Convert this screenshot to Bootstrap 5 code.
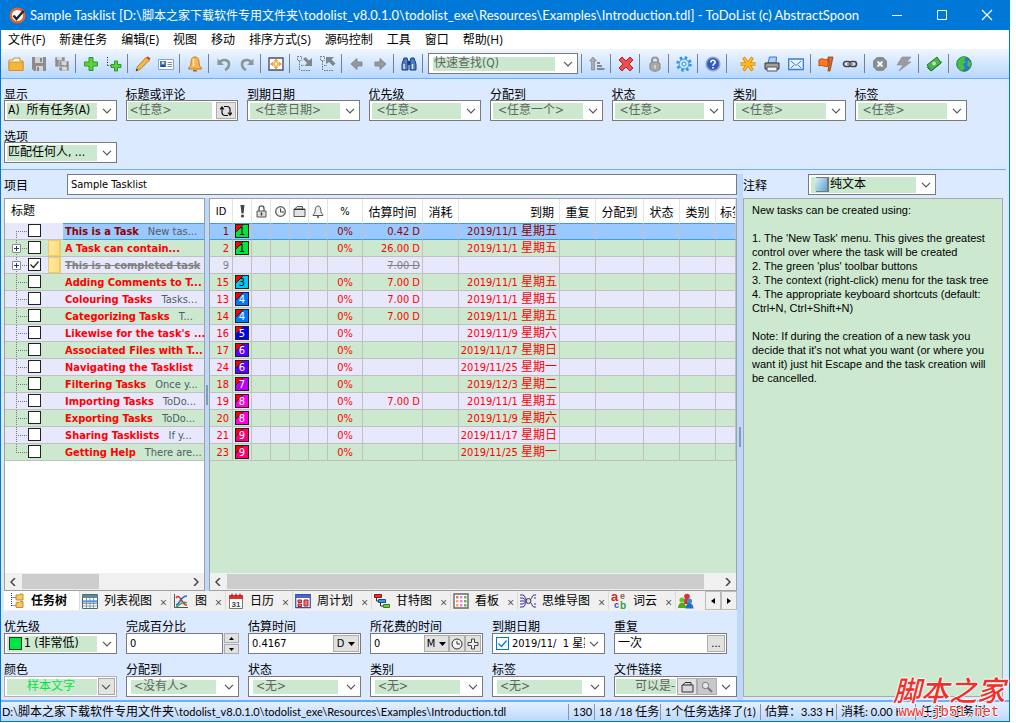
<!DOCTYPE html>
<html lang="zh-CN">
<head>
<meta charset="utf-8">
<meta name="viewport" content="width=device-width, initial-scale=1">
<title>Sample Tasklist - ToDoList</title>
<link href="https://cdn.jsdelivr.net/npm/bootstrap@5.3.0/dist/css/bootstrap.min.css" rel="stylesheet">
<style>
:root{--green:#cce8cf;--lav:#e8e8fd;--panel:#dceaff;--split:#bcd8fd;--line:#6cb0fc;--edge:#7a7a7a;
  --chev:url("data:image/svg+xml,%3Csvg xmlns='http://www.w3.org/2000/svg' viewBox='0 0 10 6'%3E%3Cpath d='M1 .8l4 4 4-4' fill='none' stroke='%23555' stroke-width='1.2'/%3E%3C/svg%3E");}
body{font:11px/14px "DejaVu Sans Condensed","Open Sans","Noto Sans CJK SC",sans-serif;color:#000;background:#fff;padding:0 6px 1px 0}
.app{min-height:calc(100vh - 1px);border:1px solid #0078d7;border-top:0;background:var(--panel)}
.zh,label.cap,.menu a,.tabs-row button{font-size:12px;font-family:"Open Sans","Noto Sans CJK SC",sans-serif}
.titlebar{height:30px;background:#0078d7;color:#fff;font:13px/29px Lato,"Noto Sans CJK SC",sans-serif}
.titlebar .path-zh{font-size:12px}
.titlebar button{flex:none;width:45px;height:30px;padding:0;border:0;background:none;color:#fff;line-height:0}
.menu{height:19px;background:#fff}
.menu a{padding:0 7px;line-height:20px;color:#000;text-decoration:none}
.toolbar{height:30px;padding-left:3px;background:linear-gradient(#eff6ff,#b8d8fe);border-bottom:1px solid var(--line)}
.toolbar button{width:23px;height:24px;padding:0;border:0;background:none;line-height:0}
.toolbar .wide{margin-left:6px}
.toolbar .wide button{width:24px}
.quick{width:150px;margin:0 1px 0 2px}
.sep{width:6px;height:19px;background:linear-gradient(#76808e,#76808e) 2px 0/1px 100% no-repeat}
svg{flex:none}
.combo{display:block;width:100%;height:21px;padding:0 20px 0 7px;appearance:none;border:1px solid var(--edge);border-radius:0;font:12px/17px "DejaVu Sans Condensed","Noto Sans CJK SC",sans-serif;color:#5d665f;background-color:#fff;background-repeat:no-repeat;
  background-image:var(--chev),linear-gradient(var(--green),var(--green));background-position:right 4px center,2px 2px;background-size:10px 6px,calc(100% - 21px) 16px}
.combo.dark{color:#000;padding-left:3px}
.combo.inset{background-position:right 4px center,4px 3px;background-size:10px 6px,calc(100% - 26px) 14px}
.quick .combo{padding-left:5px}
.combo.level{padding-left:19px;background-image:var(--chev),linear-gradient(#00e640,#00e640),linear-gradient(#333,#333),linear-gradient(var(--green),var(--green));background-position:right 4px center,5px 4px,4px 3px,2px 2px;background-size:10px 6px,11px 11px,13px 13px,calc(100% - 21px) 16px}
.combo.sample{color:#00e640;padding-left:22px;border-color:#b0b0b0;background-image:var(--chev),linear-gradient(#e4e4e4,#e4e4e4),linear-gradient(#a8a8a8,#a8a8a8),linear-gradient(var(--green),var(--green));background-position:right 5px center,right 2px top 2px,right 1px top 1px,2px 2px;background-size:10px 6px,15px 15px,17px 17px,calc(100% - 21px) 16px}
.combo.format{padding-left:21px;background-image:var(--chev),linear-gradient(120deg,#d8f0fa,#5ca4cc),linear-gradient(#777,#777),linear-gradient(var(--green),var(--green));background-position:right 4px center,6px 3px,7px 2px,2px 2px;background-size:10px 6px,12px 13px,13px 15px,calc(100% - 21px) 16px}
.box{display:flex;height:21px;border:1px solid var(--edge);background:#fff;padding:1px}
.box input[type=text]{flex:1 1 0;min-width:0;border:0;padding:0 2px;background:#fff;font:11px/15px "DejaVu Sans Condensed","Noto Sans CJK SC",sans-serif;outline:0}
.box input.hint[type=text]{background:var(--green);color:#5d665f;font-size:12px}
.box button{flex:none;height:17px;border:1px solid #adadad;background:#e1e1e1;padding:0;font-size:11px;line-height:13px;display:flex;align-items:center;justify-content:center}
.box .due-on{appearance:none;width:13px;height:13px;flex:none;margin:0 3px 0 2px;border:1px solid #0078d7;background:url("data:image/svg+xml,%3Csvg xmlns='http://www.w3.org/2000/svg' viewBox='0 0 11 11'%3E%3Cpath d='M1.5 5.5l3 3 5-6' fill='none' stroke='%230078d7' stroke-width='1.2'/%3E%3C/svg%3E")}
.spin button{width:15px;height:10px}
.cap{display:block;flex:none;height:12px;line-height:14px;white-space:nowrap}
.fields .cap{line-height:12px}
.filters{display:grid;grid-template-columns:repeat(8,minmax(0,1fr));gap:9px;padding:9px 39px 6px 3px;border-bottom:1px solid var(--line);margin-right:3px}
.main-area{padding:4px 0 0 3px}
.project{height:21px;width:100%;border:1px solid var(--edge);padding:0 3px;font-size:11px;background:#fff}
.pane{border:1px solid #a0a0a0;min-width:0}
.tree-pane{flex:none;width:201px}
.splitter{flex:none;width:4px;background:var(--split)}
.splitter.big{width:6px}
.splitter i{width:2px;height:20px;background:#7f9dc0}
.treerow{display:grid;grid-template-columns:23px 13px 22px minmax(0,1fr);height:17px;border-bottom:1px solid #c0c0c0;white-space:nowrap}
.treerow:nth-child(odd){background:var(--lav)}
.treerow:nth-child(even){background:var(--green)}
.branch{--h:repeating-linear-gradient(to right,#777 0 1px,transparent 1px 2px) 11px 8px/12px 1px no-repeat;--v:repeating-linear-gradient(to bottom,#777 0 1px,transparent 1px 2px);background:var(--h),var(--v) 11px 0/1px 100% no-repeat}
.treerow:first-child .branch{background:var(--h),var(--v) 11px 8px/1px 8px no-repeat}
.treerow:last-child .branch{background:var(--h),var(--v) 11px 0/1px 8px no-repeat}
.branch button{display:block;width:9px;height:9px;margin:4px 0 0 7px;padding:0;border:1px solid #8a8a8a;border-radius:1px;background:linear-gradient(#24348c,#24348c) center/5px 1px no-repeat,linear-gradient(#24348c,#24348c) center/1px 5px no-repeat,#fff}
.treerow input{appearance:none;width:13px;height:13px;margin:1px 0;border:1px solid #222;background:#fff}
.treerow input:checked{background:#fff url("data:image/svg+xml,%3Csvg xmlns='http://www.w3.org/2000/svg' viewBox='0 0 11 11'%3E%3Cpath d='M1.5 5.5l3 3 5-6' fill='none' stroke='%23222' stroke-width='1.2'/%3E%3C/svg%3E")}
.treerow .fold{width:13px;height:16px;margin-left:7px;background:linear-gradient(100deg,#ffe9a0,#fddc7c);border:1px solid #f0cd60;border-right-width:2px}
.treerow label{height:16px;padding-left:2px;line-height:18px;color:#505c66}
.treerow b{color:#f00}
.treerow b+span{margin-left:9px}
.treerow .picked{height:17px;background:#99c9ff;box-shadow:inset 0 1px #3c9ce8,inset 0 -1px #3c9ce8}
.treerow .picked b{color:#900000}
.treerow .gone b{color:#808080;text-decoration:line-through}
.grid{width:526px;min-width:100%;table-layout:fixed;border-collapse:separate;border-spacing:0}
.grid th{height:24px;padding:0;font:12px/23px "Noto Sans CJK SC",sans-serif;background:#fff;border-right:1px solid #e4e4e4;text-align:center;vertical-align:middle;white-space:nowrap;overflow:hidden}
.grid th svg{display:block;margin:0 auto}
.grid th.num{font:11px/23px "DejaVu Sans Condensed",sans-serif}
.grid th.r{text-align:right;padding-right:5px}
.grid td{height:17px;padding:2px 3px 0 0;line-height:14px;color:#f00;text-align:right;border-right:1px solid #c0c0c0;border-bottom:1px solid #c0c0c0;white-space:nowrap}
.grid tbody tr:nth-child(odd) td{background:var(--lav)}
.grid tbody tr:nth-child(even) td{background:var(--green)}
.grid tbody tr.sel td{background:#99c9ff;color:#900000;border-bottom-color:#3c9ce8;box-shadow:inset 0 1px #3c9ce8}
.grid tbody tr.done td{color:#808080}
.grid td:nth-child(8),.grid td:nth-child(10){padding-right:2px}
.grid td:nth-child(7){text-align:center;padding-right:0}
.grid td:nth-child(2){text-align:center;padding:0}
.wk{font:12px/1px "Noto Sans CJK SC",sans-serif}
.pr{display:block;width:14px;height:14px;margin:0 2px;border:1px solid #222;line-height:13px;color:#fff;background-image:linear-gradient(135deg,#f00 0 26%,#222 26% 31%,transparent 31%)}
.p1{background-color:#00e640;color:#000}.p3{background-color:#00c8f0;color:#000}.p4{background-color:#0078f8}.p5{background-color:#0000f0}.p6{background-color:#5a00ff}.p7{background-color:#b400f8}.p8{background-color:#ff00dc}.p9{background-color:#ff0070}
.sbar{height:17px;background:#f0f0f0;padding:0 5px}
.sbar span{height:15px;margin-left:6px;background:#cdcdcd}
.sbar .short{width:77px}
.sbar .long{flex:1;margin-right:21px}
.tabs-row{height:20px;background:#f0f0f0}
.tabs-row button{display:flex;flex:none;align-items:center;height:19px;padding:0 2px;border:0;border-right:1px solid #dcdcdc;background:#f0f0f0;white-space:nowrap}
.tabs-row button>span{margin-left:6px}
.tabs-row button.on{background:#fff;font-weight:700;width:76px}
.tabs-row button.on>span{margin-left:5px}
.tabs-row .rest{flex:1 1 20px;min-width:0;border:0;overflow:hidden}
.tabs-row .arrow{width:16px;border:1px solid #bbb;justify-content:center;padding:0}
.tabs-row small{width:9px;font-size:12px;color:#444;padding-top:5px;margin-left:7px}
.fields{display:grid;grid-template-columns:repeat(6,minmax(0,1fr));gap:10px 9px;padding:10px 10px 3px 0}
.fields .wider{margin-right:-10px}
.notes-col{flex:none;width:260px;margin:0 6px 3px 0}
.notes{width:100%;margin-top:3px;border:1px solid #a9a9a9;background:var(--green);font:11px/14px "Liberation Sans",sans-serif;padding:4px 8px;resize:none;white-space:pre;outline:0;overflow:hidden}
.status{height:21px;border-top:2px solid var(--line);background:linear-gradient(#e4f0ff,#bcd9fc);font:11px/21px Lato,"Noto Sans CJK SC",sans-serif;white-space:nowrap}
.status .cell{flex:none;border-left:1px solid #8a96a6;line-height:16px;padding-left:4px}
.status em{font-style:normal;font-size:12px}
.seal{right:4px;bottom:2px;color:#f0302c;text-align:center;text-shadow:1px 0 #fff,-1px 0 #fff,0 1px #fff,0 -1px #fff;pointer-events:none}
.seal b{display:block;font:italic 500 28px/32px "Noto Sans CJK SC",sans-serif}
.seal span{display:block;font:14px/14px "Liberation Mono",monospace}
</style>
</head>
<body>
<div class="app d-flex flex-column position-relative">
  <header class="titlebar d-flex align-items-center">
    <svg class="ms-2 me-1" width="17" height="17" viewBox="0 0 17 17"><circle cx="8.500" cy="8.500" r="6.800" fill="#fff" stroke="#e8602c" stroke-width="2.400"/><path d="M4.500 8.500l3 3.500L14.500 4" fill="none" stroke="#222" stroke-width="2.400"/></svg>
    <span class="flex-grow-1 text-nowrap">Sample Tasklist [D:\<span class="path-zh">脚本之家下载软件专用文件夹</span>\todolist_v8.0.1.0\todolist_exe\Resources\Examples\Introduction.tdl] - ToDoList (c) AbstractSpoon</span>
    <button aria-label="最小化"><svg width="12" height="12"><path d="M1 6.500h10" stroke="#fff"/></svg></button>
    <button aria-label="最大化"><svg width="12" height="12"><path d="M1.500 1.500h9v9h-9z" fill="none" stroke="#fff"/></svg></button>
    <button aria-label="关闭"><svg width="12" height="12"><path d="M1 1l10 10M11 1L1 11" stroke="#fff" stroke-width="1.200"/></svg></button>
  </header>
  <nav class="menu d-flex">
    <a href="#">文件(F)</a><a href="#">新建任务</a><a href="#">编辑(E)</a><a href="#">视图</a><a href="#">移动</a><a href="#">排序方式(S)</a><a href="#">源码控制</a><a href="#">工具</a><a href="#">窗口</a><a href="#">帮助(H)</a>
  </nav>
  <div class="toolbar d-flex align-items-center" role="toolbar">
    <button aria-label="打开"><svg width="16" height="16" viewBox="0 0 16 16"><path d="M1 4h4l1-2h6v3h3v9H1z" fill="#fff6dc" stroke="#c98d1e"/><path d="M1 6h14v8.500H1z" fill="#f6b63c" stroke="#c98d1e" stroke-width=".8"/></svg></button>
    <button aria-label="保存"><svg width="16" height="16" viewBox="0 0 16 16"><path d="M1 1h14v14H3l-2-2z" fill="#8c8c8c"/><path d="M4 1h8v6H4zM5 10h7v5H5z" fill="#d4d4d4"/><path d="M9 2h2v4H9zM6 11h2v4H6z" fill="#888"/></svg></button>
    <button aria-label="全部保存"><svg width="16" height="16" viewBox="0 0 16 16"><path d="M1 1h10v10H1zM5 5h10v10H5z" fill="#8c8c8c" stroke="#d8e6f8" stroke-width=".6"/><path d="M3 1h5v3H3zM7.500 5.500h5v3.500h-5zM8 11h5v3.500H8z" fill="#d8d8d8"/></svg></button>
    <span class="sep"></span>
    <button aria-label="新建任务"><svg width="16" height="16" viewBox="0 0 16 16"><path d="M6 1.500h4V6h4.500v4H10v4.500H6V10H1.500V6H6z" fill="#5ed03c" stroke="#2a9a26"/></svg></button>
    <button aria-label="新建子任务"><svg width="16" height="16" viewBox="0 0 16 16"><path d="M1.500 1v9M1.500 9.500H5" stroke="#222" stroke-dasharray="1 1.500" fill="none"/><path d="M8.500 5h3v3.500H15v3h-3.500V15h-3v-3.500H5v-3h3.500z" fill="#5ed03c" stroke="#2a9a26"/></svg></button>
    <span class="sep"></span>
    <button aria-label="编辑"><svg width="16" height="16" viewBox="0 0 16 16"><path d="M1 15l1.500-4.500L11 1.500 14.500 4 5.500 13z" fill="#f8b840" stroke="#a06a1c" stroke-width=".8"/><path d="M11 1.500L13 .5 15.500 2.500 14.500 4z" fill="#e03c2c"/><path d="M1 15l.7-2.200 1.500 1.200z" fill="#222"/></svg></button>
    <button aria-label="卡片"><svg width="16" height="16" viewBox="0 0 16 16"><path d="M.5 3.500h15v10H.5z" fill="#fff" stroke="#7fa6d6"/><path d="M2 5h6v6H2z" fill="#2c7ad0"/><circle cx="5" cy="7" r="1.400" fill="#ffd9a8"/><path d="M3 11c.5-3 3.500-3 4 0z" fill="#24407c"/><path d="M9.500 6.500H14M9.500 8.500H14M9.500 10.500H14" stroke="#889"/></svg></button>
    <span class="sep"></span>
    <button aria-label="提醒"><svg width="16" height="16" viewBox="0 0 16 16"><path d="M8 1c4 0 4 4 4 7 0 2 2.500 3 2.500 5h-13c0-2 2.500-3 2.500-5 0-3 0-7 4-7z" fill="#f7b74e" stroke="#c07818"/><path d="M6.500 3v7" stroke="#ffe9ba" stroke-width="1.500"/><path d="M6 14h4v1.500H6z" fill="#a8641c"/></svg></button>
    <span class="sep"></span>
    <button aria-label="撤销"><svg width="16" height="16" viewBox="0 0 16 16"><path d="M3 7C7 2 13 4 13 8c0 3-2 5-4 6" fill="none" stroke="#8c949c" stroke-width="2.600"/><path d="M1.500 2.500V9H8z" fill="#8c949c"/></svg></button>
    <button aria-label="重做"><svg width="16" height="16" viewBox="0 0 16 16"><path d="M13 7C9 2 3 4 3 8c0 3 2 5 4 6" fill="none" stroke="#8c949c" stroke-width="2.600"/><path d="M14.500 2.500V9H8z" fill="#8c949c"/></svg></button>
    <span class="sep"></span>
    <button aria-label="最大化视图"><svg width="16" height="16" viewBox="0 0 16 16"><path d="M1 2h14v12H1z" fill="#fff" stroke="#4c5068" stroke-width="1.400"/><path d="M8 2.500L10.500 5.500h-5zM8 13.500L10.500 10.500h-5zM2 8l3.500-2.500v5zM14 8l-3.500-2.500v5z" fill="#f09c28"/><circle cx="8" cy="8" r="2" fill="none" stroke="#f09c28"/></svg></button>
    <span class="sep"></span>
    <button aria-label="展开"><svg width="16" height="16" viewBox="0 0 16 16"><path d="M.5.5h4v4h-4zM2.500 5v10M4 9.500h3M4 14.500h9" fill="none" stroke="#777" stroke-dasharray="1.500 1"/><path d="M6 3l2.500-2 3.500 3.500L15 2v8H7.500L10 7z" fill="#80868c"/></svg></button>
    <button aria-label="折叠"><svg width="16" height="16" viewBox="0 0 16 16"><path d="M.5.5h4v4h-4zM2.500 5v10M4 9.500h3M4 14.500h9" fill="none" stroke="#777" stroke-dasharray="1.500 1"/><path d="M6 1h8l-2.500 2.500 4 4-2.500 2.500-4-4L6 8z" fill="#80868c"/></svg></button>
    <span class="sep"></span>
    <button aria-label="后退"><svg width="16" height="16" viewBox="0 0 16 16"><path d="M2 8l6-5.500V6h5v4H8v3.500z" fill="#949aa0" stroke="#757b82" stroke-width=".8"/></svg></button>
    <button aria-label="前进"><svg width="16" height="16" viewBox="0 0 16 16"><path d="M14 8L8 2.500V6H3v4h5v3.500z" fill="#949aa0" stroke="#757b82" stroke-width=".8"/></svg></button>
    <span class="sep"></span>
    <button aria-label="查找"><svg width="16" height="16" viewBox="0 0 16 16"><path d="M3 2h3l1 3v9H1V8zM13 2h-3L9 5v9h6V8z" fill="#4a7cc4" stroke="#1e3c78"/><path d="M6.500 5h3v4h-3z" fill="#1e3c78"/><path d="M3 8v5M11.500 8v5" stroke="#d4e4f8" stroke-width="1.500"/></svg></button>
    <span class="sep"></span>
    <div class="quick"><select class="combo inset" aria-label="快速查找"><option>快速查找(Q)</option></select></div>
    <span class="sep"></span>
    <button aria-label="排序"><svg width="16" height="16" viewBox="0 0 16 16"><path d="M4 1L7.500 5H5.500v9h-3V5H.5z" fill="#a8adb2" stroke="#7d8389" stroke-width=".7"/><path d="M8 7h3M8 10h5M8 13h7.500" stroke="#84898f" stroke-width="2"/></svg></button>
    <span class="sep"></span>
    <button aria-label="删除"><svg width="16" height="16" viewBox="0 0 16 16"><path d="M4 1l4 4 4-4 3 3-4 4 4 4-3 3-4-4-4 4-3-3 4-4-4-4z" fill="#ee4e4e" stroke="#b81c24"/></svg></button>
    <span class="sep"></span>
    <button aria-label="加密"><svg width="16" height="16" viewBox="0 0 16 16"><path d="M5 8V4.500c0-4 6-4 6 0V8" fill="none" stroke="#999" stroke-width="2.200"/><path d="M3 7.500c3-2 7-2 10 0V13c-3 3-7 3-10 0z" fill="#a8a8a8" stroke="#858585"/><path d="M8 9v3.500" stroke="#ddd" stroke-width="1.500"/></svg></button>
    <span class="sep"></span>
    <button aria-label="设置"><svg width="16" height="16" viewBox="0 0 16 16"><circle cx="8" cy="8" r="6.500" fill="none" stroke="#2f93dc" stroke-width="2.500" stroke-dasharray="2.500 2.600"/><circle cx="8" cy="8" r="5" fill="#c8e6fb" stroke="#2f93dc"/><circle cx="8" cy="8" r="2" fill="#eef7ff" stroke="#2f93dc"/></svg></button>
    <span class="sep"></span>
    <button aria-label="帮助"><svg width="16" height="16" viewBox="0 0 16 16"><circle cx="8" cy="8" r="6.800" fill="#2c58c8" stroke="#9aa6bc" stroke-width="1.600"/><path d="M5.800 6.500c0-3 4.600-2.800 4.400-.2C10 8 8 8 8 9.800M8 11v1.600" fill="none" stroke="#fff" stroke-width="1.600"/></svg></button>
    <span class="sep"></span>
    <div class="wide d-flex align-items-center">
    <button aria-label="新建"><svg width="16" height="16" viewBox="0 0 16 16"><path d="M.5 8h15M3.500 1.500l9 13M12.500 1.500l-9 13" stroke="#e08a10" stroke-width="3.400"/><path d="M1 8h14M4 2l8 12M12 2L4 14" stroke="#ffb81c" stroke-width="2"/></svg></button>
    <button aria-label="打印"><svg width="16" height="16" viewBox="0 0 16 16"><path d="M4 7l1.500-6h7L12 7z" fill="#a8d0f8" stroke="#3c78bc"/><path d="M1 7h14v6H1z" fill="#a0a0a0" stroke="#333"/><path d="M3 11h10v4H3z" fill="#f4f4f4" stroke="#555"/></svg></button>
    <button aria-label="邮件"><svg width="16" height="16" viewBox="0 0 16 16"><path d="M.7 3h14.600v10.500H.7z" fill="#e4f2ff" stroke="#3c7cc8" stroke-width="1.300"/><path d="M3 5l5 4.500L13 5M3 12l3-3M13 12l-3-3" fill="none" stroke="#3c7cc8"/></svg></button>
    <span class="sep"></span>
    <button aria-label="标记"><svg width="16" height="16" viewBox="0 0 16 16"><path d="M1 4c3-3 6 1 9-1v7c-3 2-6-2-9 0z" fill="#ff7a1c" stroke="#c04a08"/><path d="M10 1h5l-3 14h-2l1-7z" fill="#d8692c" stroke="#8a3c10" stroke-width=".8"/></svg></button>
    <button aria-label="链接"><svg width="16" height="16" viewBox="0 0 16 16"><rect x="1.500" y="5.500" width="7" height="5" rx="2.500" fill="none" stroke="#444" stroke-width="1.700"/><rect x="7.500" y="5.500" width="7" height="5" rx="2.500" fill="none" stroke="#444" stroke-width="1.700"/><path d="M5 8h6" stroke="#888" stroke-width="1.600"/></svg></button>
    <span class="sep"></span>
    <button aria-label="停止"><svg width="16" height="16" viewBox="0 0 16 16"><path d="M5 1h6l4 4v6l-4 4H5l-4-4V5z" fill="#888c90"/><path d="M5.500 5.500l5 5M10.500 5.500l-5 5" stroke="#fff" stroke-width="2"/></svg></button>
    <button aria-label="执行"><svg width="16" height="16" viewBox="0 0 16 16"><path d="M6 1h9l-4 5h4L3 15l4-6H1z" fill="#999da2" stroke="#868a90" stroke-width=".6"/></svg></button>
    <span class="sep"></span>
    <button aria-label="捐赠"><svg width="16" height="16" viewBox="0 0 16 16"><path d="M1 9L11 1l4 6L5 15z" fill="#4cb44c" stroke="#1c7c2c"/><path d="M1 11l4 4 10-8v-2" fill="none" stroke="#1c7c2c"/><circle cx="8" cy="7.500" r="2" fill="#b4e8a8"/></svg></button>
    <span class="sep"></span>
    <button aria-label="网站"><svg width="16" height="16" viewBox="0 0 16 16"><circle cx="8" cy="8" r="7.300" fill="#2c78d4" stroke="#2a8038"/><path d="M1.500 6C3 2 7 0 10 1.500L8 4l2 2-3 2 2 4-3 3C2 13 1 9 1.500 6zM12 4l3 3-1 5-3-3z" fill="#46c04a"/></svg></button>
    </div>
  </div>

  <section class="filters">
    <div><label class="cap" for="f1">显示</label><select id="f1" class="combo dark"><option>A)&nbsp; 所有任务(A)</option></select></div>
    <div><label class="cap" for="f2">标题或评论</label><div class="box"><input id="f2" class="hint" type="text" value="&lt;任意&gt;"><button class="ms-1" style="width:20px" aria-label="刷新"><svg width="12" height="12" viewBox="0 0 12 12"><path d="M4 1.500h3a3 3 0 0 1 3 3V10M8 10.500H5a3 3 0 0 1-3-3V2M0 4.500L2 2l2 2.500M8 7.500l2 2.500 2-2.500" fill="none" stroke="#111" stroke-width="1.200"/></svg></button></div></div>
    <div><label class="cap" for="f3">到期日期</label><select id="f3" class="combo"><option>&lt;任意日期&gt;</option></select></div>
    <div><label class="cap" for="f4">优先级</label><select id="f4" class="combo"><option>&lt;任意&gt;</option></select></div>
    <div><label class="cap" for="f5">分配到</label><select id="f5" class="combo"><option>&lt;任意一个&gt;</option></select></div>
    <div><label class="cap" for="f6">状态</label><select id="f6" class="combo"><option>&lt;任意&gt;</option></select></div>
    <div><label class="cap" for="f7">类别</label><select id="f7" class="combo"><option>&lt;任意&gt;</option></select></div>
    <div><label class="cap" for="f8">标签</label><select id="f8" class="combo"><option>&lt;任意&gt;</option></select></div>
    <div><label class="cap" for="f9">选项</label><select id="f9" class="combo dark"><option>匹配任何人, ...</option></select></div>
  </section>

  <main class="main-area d-flex flex-grow-1">
    <div class="d-flex flex-column flex-grow-1" style="min-width:0">
      <div class="d-flex align-items-center"><label class="cap" for="proj" style="width:63px">项目</label><input id="proj" class="project flex-grow-1" type="text" value="Sample Tasklist"></div>
      <div class="d-flex flex-grow-1" style="margin-top:3px">
        <div class="pane tree-pane bg-white d-flex flex-column">
          <div class="zh" style="height:24px;line-height:24px;padding-left:6px">标题</div>
          <div>
            <div class="treerow"><span class="branch"></span><input type="checkbox" id="t1"><span></span><label class="picked" for="t1"><b>This is a Task</b><span>New tas...</span></label></div>
            <div class="treerow"><span class="branch"><button aria-label="展开"></button></span><input type="checkbox" id="t2"><span class="fold"></span><label for="t2"><b>A Task can contain...</b></label></div>
            <div class="treerow"><span class="branch"><button aria-label="展开"></button></span><input type="checkbox" id="t9" checked><span class="fold"></span><label class="gone" for="t9"><b>This is a completed task</b></label></div>
            <div class="treerow"><span class="branch"></span><input type="checkbox" id="t15"><span></span><label for="t15"><b>Adding Comments to T...</b></label></div>
            <div class="treerow"><span class="branch"></span><input type="checkbox" id="t13"><span></span><label for="t13"><b>Colouring Tasks</b><span>Tasks...</span></label></div>
            <div class="treerow"><span class="branch"></span><input type="checkbox" id="t14"><span></span><label for="t14"><b>Categorizing Tasks</b><span>T...</span></label></div>
            <div class="treerow"><span class="branch"></span><input type="checkbox" id="t16"><span></span><label for="t16"><b>Likewise for the task's ...</b></label></div>
            <div class="treerow"><span class="branch"></span><input type="checkbox" id="t17"><span></span><label for="t17"><b>Associated Files with T...</b></label></div>
            <div class="treerow"><span class="branch"></span><input type="checkbox" id="t24"><span></span><label for="t24"><b>Navigating the Tasklist</b></label></div>
            <div class="treerow"><span class="branch"></span><input type="checkbox" id="t18"><span></span><label for="t18"><b>Filtering Tasks</b><span>Once y...</span></label></div>
            <div class="treerow"><span class="branch"></span><input type="checkbox" id="t19"><span></span><label for="t19"><b>Importing Tasks</b><span>ToDo...</span></label></div>
            <div class="treerow"><span class="branch"></span><input type="checkbox" id="t20"><span></span><label for="t20"><b>Exporting Tasks</b><span>ToDo...</span></label></div>
            <div class="treerow"><span class="branch"></span><input type="checkbox" id="t21"><span></span><label for="t21"><b>Sharing Tasklists</b><span>If y...</span></label></div>
            <div class="treerow"><span class="branch"></span><input type="checkbox" id="t23"><span></span><label for="t23"><b>Getting Help</b><span>There are...</span></label></div>
          </div>
          <div class="sbar d-flex align-items-center mt-auto"><svg width="6" height="8" viewBox="0 0 6 8"><path d="M5 0L1 4l4 4" fill="none" stroke="#444" stroke-width="1.500"/></svg><span class="short"></span><svg class="ms-auto" width="6" height="8" viewBox="0 0 6 8"><path d="M1 0l4 4-4 4" fill="none" stroke="#444" stroke-width="1.500"/></svg></div>
        </div>
        <div class="splitter d-flex align-items-center justify-content-center"><i></i></div>
        <div class="pane d-flex flex-column flex-grow-1 overflow-hidden" style="background:var(--green)">
          <div class="overflow-hidden">
          <table class="grid">
            <colgroup><col style="width:23px"><col style="width:19px"><col style="width:19px"><col style="width:19px"><col style="width:19px"><col style="width:19px"><col style="width:35px"><col style="width:60px"><col style="width:36px"><col style="width:101px"><col style="width:36px"><col style="width:48px"><col style="width:36px"><col style="width:36px"><col></colgroup>
            <thead><tr>
              <th class="num">ID</th>
              <th aria-label="优先级"><svg width="5" height="13" viewBox="0 0 5 13"><path d="M.5 0h4l-1 8.500h-2z" fill="#444"/><circle cx="2.500" cy="11" r="1.600" fill="#444"/></svg></th>
              <th aria-label="锁定"><svg width="11" height="13" viewBox="0 0 11 13"><path d="M3 6V3.500c0-3.500 5-3.500 5 0V6" fill="none" stroke="#555" stroke-width="1.300"/><path d="M1 6h9v6H1z" fill="#ddd" stroke="#555"/><path d="M5.500 7.500v3" stroke="#333" stroke-width="1.500"/></svg></th>
              <th aria-label="时钟"><svg width="11" height="11" viewBox="0 0 11 11"><circle cx="5.500" cy="5.500" r="4.800" fill="#f4f4f4" stroke="#555" stroke-width="1.200"/><path d="M5.500 2.500v3.500H9" fill="none" stroke="#444"/></svg></th>
              <th aria-label="文件"><svg width="13" height="12" viewBox="0 0 13 12"><path d="M1 4h11v7.500H1zM2 4l2-2.500h5.500V4" fill="#e4e4e4" stroke="#555"/><path d="M1 4.500h11" stroke="#333"/></svg></th>
              <th aria-label="提醒"><svg width="12" height="13" viewBox="0 0 12 13"><path d="M6 1c3 0 2.500 4 3 6s2 2 2 3.500H1C1 9 2.500 9 3 7s0-6 3-6z" fill="#eee" stroke="#555"/><path d="M5 12h2" stroke="#444" stroke-width="1.500"/></svg></th>
              <th class="num">%</th><th>估算时间</th><th>消耗</th><th class="r">到期</th><th>重复</th><th>分配到</th><th>状态</th><th>类别</th><th class="text-start ps-1">标签</th>
            </tr></thead>
            <tbody>
              <tr class="sel"><td>1</td><td><span class="pr p1">1</span></td><td></td><td></td><td></td><td></td><td>0%</td><td>0.42 D</td><td></td><td>2019/11/1 <span class="wk">星期五</span></td><td></td><td></td><td></td><td></td><td></td></tr>
              <tr><td>2</td><td><span class="pr p1">1</span></td><td></td><td></td><td></td><td></td><td>0%</td><td>26.00 D</td><td></td><td>2019/11/1 <span class="wk">星期五</span></td><td></td><td></td><td></td><td></td><td></td></tr>
              <tr class="done"><td>9</td><td></td><td></td><td></td><td></td><td></td><td></td><td><s>7.00 D</s></td><td></td><td></td><td></td><td></td><td></td><td></td><td></td></tr>
              <tr><td>15</td><td><span class="pr p3">3</span></td><td></td><td></td><td></td><td></td><td>0%</td><td>7.00 D</td><td></td><td>2019/11/1 <span class="wk">星期五</span></td><td></td><td></td><td></td><td></td><td></td></tr>
              <tr><td>13</td><td><span class="pr p4">4</span></td><td></td><td></td><td></td><td></td><td>0%</td><td>7.00 D</td><td></td><td>2019/11/1 <span class="wk">星期五</span></td><td></td><td></td><td></td><td></td><td></td></tr>
              <tr><td>14</td><td><span class="pr p4">4</span></td><td></td><td></td><td></td><td></td><td>0%</td><td>7.00 D</td><td></td><td>2019/11/1 <span class="wk">星期五</span></td><td></td><td></td><td></td><td></td><td></td></tr>
              <tr><td>16</td><td><span class="pr p5">5</span></td><td></td><td></td><td></td><td></td><td>0%</td><td></td><td></td><td>2019/11/9 <span class="wk">星期六</span></td><td></td><td></td><td></td><td></td><td></td></tr>
              <tr><td>17</td><td><span class="pr p6">6</span></td><td></td><td></td><td></td><td></td><td>0%</td><td></td><td></td><td>2019/11/17 <span class="wk">星期日</span></td><td></td><td></td><td></td><td></td><td></td></tr>
              <tr><td>24</td><td><span class="pr p6">6</span></td><td></td><td></td><td></td><td></td><td>0%</td><td></td><td></td><td>2019/11/25 <span class="wk">星期一</span></td><td></td><td></td><td></td><td></td><td></td></tr>
              <tr><td>18</td><td><span class="pr p7">7</span></td><td></td><td></td><td></td><td></td><td>0%</td><td></td><td></td><td>2019/12/3 <span class="wk">星期二</span></td><td></td><td></td><td></td><td></td><td></td></tr>
              <tr><td>19</td><td><span class="pr p8">8</span></td><td></td><td></td><td></td><td></td><td>0%</td><td>7.00 D</td><td></td><td>2019/11/1 <span class="wk">星期五</span></td><td></td><td></td><td></td><td></td><td></td></tr>
              <tr><td>20</td><td><span class="pr p8">8</span></td><td></td><td></td><td></td><td></td><td>0%</td><td></td><td></td><td>2019/11/9 <span class="wk">星期六</span></td><td></td><td></td><td></td><td></td><td></td></tr>
              <tr><td>21</td><td><span class="pr p9">9</span></td><td></td><td></td><td></td><td></td><td>0%</td><td></td><td></td><td>2019/11/17 <span class="wk">星期日</span></td><td></td><td></td><td></td><td></td><td></td></tr>
              <tr><td>23</td><td><span class="pr p9">9</span></td><td></td><td></td><td></td><td></td><td>0%</td><td></td><td></td><td>2019/11/25 <span class="wk">星期一</span></td><td></td><td></td><td></td><td></td><td></td></tr>
            </tbody>
          </table>
          </div>
          <div class="sbar d-flex align-items-center mt-auto"><svg width="6" height="8" viewBox="0 0 6 8"><path d="M5 0L1 4l4 4" fill="none" stroke="#444" stroke-width="1.500"/></svg><span class="long"></span><svg width="6" height="8" viewBox="0 0 6 8"><path d="M1 0l4 4-4 4" fill="none" stroke="#444" stroke-width="1.500"/></svg></div>
        </div>
      </div>
      <div class="tabs-row d-flex">
        <button class="on"><svg width="16" height="16" viewBox="0 0 16 16" class="ms-1"><path d="M1.500 0v13M1.500 4.500H6M1.500 12.500H6" fill="none" stroke="#333" stroke-dasharray="1 1"/><path d="M6 2h3l1-1h3v6H6zM6 9.500h3l1-1h3v6H6z" fill="#f8c85c" stroke="#b07c1c" stroke-width=".8"/></svg><span>任务树</span></button>
        <button><svg width="16" height="16" viewBox="0 0 16 16"><path d="M.5 1.500h15v14H.5z" fill="#fff" stroke="#4c6c70"/><path d="M.5 2h15v3H.5z" fill="#5c8c8c"/><path d="M1 8h14M1 10.500h14M1 13h14M4.500 5v10M8 5v10M11.500 5v10" stroke="#6c8c90" stroke-width=".8"/><path d="M1 7.500h14v2H1z" fill="#5a94f0"/></svg><span>列表视图</span><small>×</small></button>
        <button><svg width="16" height="16" viewBox="0 0 16 16"><path d="M1.500 1v13.500H15" fill="none" stroke="#555"/><path d="M3 5c4-6 6 8 11 7" fill="none" stroke="#e0302c" stroke-width="1.600"/><path d="M3 12c4 0 4-9 11-9" fill="none" stroke="#2c64d0" stroke-width="1.600"/><path d="M3 14c4-1 6-7 11-4" fill="none" stroke="#32a840" stroke-width="1.400"/></svg><span>图</span><small>×</small></button>
        <button><svg width="16" height="16" viewBox="0 0 16 16"><path d="M1.500 3.500h13v12h-13z" fill="#fff" stroke="#777"/><path d="M1 2h14v4H1z" fill="#e0302c"/><path d="M4 .5v3M8 .5v3M12 .5v3" stroke="#8a1414"/><text x="8" y="14" text-anchor="middle" font-size="8" font-family="Liberation Sans" font-weight="700" fill="#444">31</text></svg><span>日历</span><small>×</small></button>
        <button><svg width="16" height="16" viewBox="0 0 16 16"><path d="M.7 1.700h14.600v13H.7z" fill="#f8f8ff" stroke="#3850a0" stroke-width="1.200"/><path d="M1 2h14v3H1z" fill="#4468c8"/><path d="M3 7h3.500v2.500H3zM3 11h3.500v2.500H3zM9 7h4v6H9z" fill="#f07474" stroke="#b02028"/></svg><span>周计划</span><small>×</small></button>
        <button><svg width="16" height="16" viewBox="0 0 16 16"><path d="M.5 1.500h7v3h-7z" fill="#e03438" stroke="#901418"/><path d="M4.500 6.500h7v3h-7z" fill="#38a0e0" stroke="#144c90"/><path d="M9.500 11.500h6v3h-6z" fill="#7cc838" stroke="#3c7c14"/><path d="M2.500 5v3H4M6.500 10v3H9" fill="none" stroke="#333"/></svg><span>甘特图</span><small>×</small></button>
        <button><svg width="16" height="16" viewBox="0 0 16 16"><path d="M1 1h14v14H1z" fill="#fff" stroke="#666" stroke-width="1.400"/><path d="M3 3h2.500v2.500H3z" fill="#f07060"/><path d="M3 7h2.500v2.500H3zM3 11h2.500v2.500H3z" fill="#f0b050"/><path d="M7 3h2.500v2.500H7zM7 7h2.500v2.500H7zM7 11h2.500v2.500H7z" fill="#d890e0"/><path d="M11 3h2.500v2.500H11zM11 7h2.500v2.500H11zM11 11h2.500v2.500H11z" fill="#70b060"/></svg><span>看板</span><small>×</small></button>
        <button><svg width="16" height="16" viewBox="0 0 16 16"><path d="M0 2h3c2 0 2 4 4 5M0 5h3l4 3M0 8h7M0 11h3l4-3M0 14h3c2 0 2-4 4-5M16 2h-2c-2 0-2 4-4 5M16 14h-2c-2 0-2-4-4-5M16 5h-2M16 11h-2" fill="none" stroke="#3c2c9c"/><circle cx="8.500" cy="8" r="2.500" fill="#ddd" stroke="#333"/></svg><span>思维导图</span><small>×</small></button>
        <button><svg width="16" height="16" viewBox="0 0 16 16" font-family="Liberation Sans" font-weight="700"><text x="0" y="8" font-size="13" fill="#e02020">a</text><text x="9" y="6" font-size="9" fill="#8c5c4c">e</text><text x="3" y="15" font-size="9" fill="#2c4ce0">c</text><text x="9" y="15.500" font-size="10" fill="#2ca040">b</text></svg><span>词云</span><small>×</small></button>
        <button class="rest" aria-label="更多视图"><svg width="16" height="16" viewBox="0 0 16 16"><circle cx="9" cy="3.500" r="2.800" fill="#d03438"/><path d="M6 6h6v5H6z" fill="#d03438"/><circle cx="4" cy="7" r="2.600" fill="#6cc020"/><path d="M0 15c0-7 8-7 8 0z" fill="#50a818"/><circle cx="11.500" cy="8" r="2.600" fill="#2c90d8"/><path d="M7.500 15.500c0-7 8-7 8 0z" fill="#1c70c0"/></svg></button>
        <button class="arrow" aria-label="左"><svg width="4" height="6"><path d="M4 0v6L0 3z"/></svg></button>
        <button class="arrow" aria-label="右"><svg width="4" height="6"><path d="M0 0v6l4-3z"/></svg></button>
      </div>
      <div class="fields">
        <div><label class="cap" for="b1">优先级</label><select id="b1" class="combo dark level"><option>1 (非常低)</option></select></div>
        <div><label class="cap" for="b2">完成百分比</label><div class="d-flex"><div class="box flex-grow-1" style="min-width:0"><input id="b2" type="text" value="0"></div><div class="box spin flex-column border-0 bg-transparent p-0" style="margin-left:1px"><button aria-label="增加"><svg width="5" height="3"><path d="M0 3h5L2.500 0z"/></svg></button><button aria-label="减少" class="mt-auto"><svg width="5" height="3"><path d="M0 0h5L2.500 3z"/></svg></button></div></div></div>
        <div><label class="cap" for="b3">估算时间</label><div class="box"><input id="b3" type="text" value="0.4167"><button style="width:26px">D<svg class="ms-1" width="7" height="4"><path d="M0 0h7L3.500 4z"/></svg></button></div></div>
        <div><label class="cap" for="b4">所花费的时间</label><div class="box"><input id="b4" type="text" value="0"><button style="width:25px">M<svg class="ms-1" width="7" height="4"><path d="M0 0h7L3.500 4z"/></svg></button><button style="width:16px" aria-label="计时"><svg width="12" height="12" viewBox="0 0 12 12"><circle cx="6" cy="6" r="5" fill="#f4f4f4" stroke="#333"/><path d="M6 3v3h3" fill="none" stroke="#333"/></svg></button><button style="width:16px" aria-label="添加"><svg width="12" height="12" viewBox="0 0 12 12"><path d="M4.500 1h3v3.500H11v3H7.500V11h-3V7.500H1v-3h3.500z" fill="#eee" stroke="#444"/></svg></button></div></div>
        <div><label class="cap" for="b5">到期日期</label><div class="box align-items-center"><input class="due-on" type="checkbox" checked aria-label="启用到期日期"><input id="b5" type="text" value="2019/11/&nbsp; 1 星期五" style="padding:0"><svg class="mx-1" width="10" height="6"><path d="M1 .8l4 4 4-4" fill="none" stroke="#555" stroke-width="1.200"/></svg></div></div>
        <div><label class="cap" for="b6">重复</label><div class="box"><input id="b6" type="text" value="一次" style="font-size:12px"><button style="width:18px">...</button></div></div>
        <div><label class="cap" for="b7">颜色</label><select id="b7" class="combo sample"><option>样本文字</option></select></div>
        <div><label class="cap" for="b8">分配到</label><select id="b8" class="combo inset"><option>&lt;没有人&gt;</option></select></div>
        <div><label class="cap" for="b9">状态</label><select id="b9" class="combo inset"><option>&lt;无&gt;</option></select></div>
        <div><label class="cap" for="b10">类别</label><select id="b10" class="combo inset"><option>&lt;无&gt;</option></select></div>
        <div><label class="cap" for="b11">标签</label><select id="b11" class="combo inset"><option>&lt;无&gt;</option></select></div>
        <div class="wider"><label class="cap" for="b12">文件链接</label><div class="box align-items-center"><input id="b12" class="hint" type="text" value="可以是-" style="padding:0 0 0 19px"><button style="width:20px;margin-left:1px" aria-label="浏览"><svg width="13" height="12" viewBox="0 0 13 12"><path d="M1 4h11v7H1zM2 4l2-2.500h6V4" fill="#d8d8d8" stroke="#333"/></svg></button><button style="width:20px;background:#c8c8c8" aria-label="查看"><svg width="12" height="12" viewBox="0 0 12 12"><circle cx="4.500" cy="4.500" r="3.200" fill="#e8e8e8" stroke="#777"/><path d="M7 7l4 4" stroke="#777" stroke-width="2"/></svg></button><svg class="mx-1" width="10" height="6"><path d="M1 .8l4 4 4-4" fill="none" stroke="#555" stroke-width="1.200"/></svg></div></div>
      </div>
    </div>
    <div class="splitter big d-flex align-items-center justify-content-center"><i></i></div>
    <aside class="notes-col d-flex flex-column">
      <div class="d-flex align-items-center"><label class="cap" for="fmt" style="width:65px">注释</label>
        <div style="width:128px"><select id="fmt" class="combo dark format"><option>纯文本</option></select></div></div>
      <textarea class="notes flex-grow-1" aria-label="注释">New tasks can be created using:

1. The 'New Task' menu. This gives the greatest
control over where the task will be created
2. The green 'plus' toolbar buttons
3. The context (right-click) menu for the task tree
4. The appropriate keyboard shortcuts (default:
Ctrl+N, Ctrl+Shift+N)

Note: If during the creation of a new task you
decide that it's not what you want (or where you
want it) just hit Escape and the task creation will
be cancelled.</textarea>
    </aside>
  </main>

  <footer class="status d-flex align-items-center">
    <span class="flex-grow-1" style="padding-left:1px">D:\<em>脚本之家下载软件专用文件夹</em>\todolist_v8.0.1.0\todolist_exe\Resources\Examples\Introduction.tdl</span>
    <span class="cell" style="width:26px">130</span>
    <span class="cell" style="width:66px">18 /18 <em>任务</em></span>
    <span class="cell" style="width:100px">1<em>个任务选择了</em>(1)</span>
    <span class="cell" style="width:76px"><em>估算：</em>3.33 H</span>
    <span class="cell" style="width:79px"><em>消耗:</em> 0.00 H</span>
    <span class="cell" style="width:94px"><em>任务: 任务树</em></span>
  </footer>
  <div class="seal position-absolute"><b>脚本之家</b><span>www.jb51.net</span></div>
</div>
<script src="https://cdn.jsdelivr.net/npm/bootstrap@5.3.0/dist/js/bootstrap.bundle.min.js"></script>
</body>
</html>
